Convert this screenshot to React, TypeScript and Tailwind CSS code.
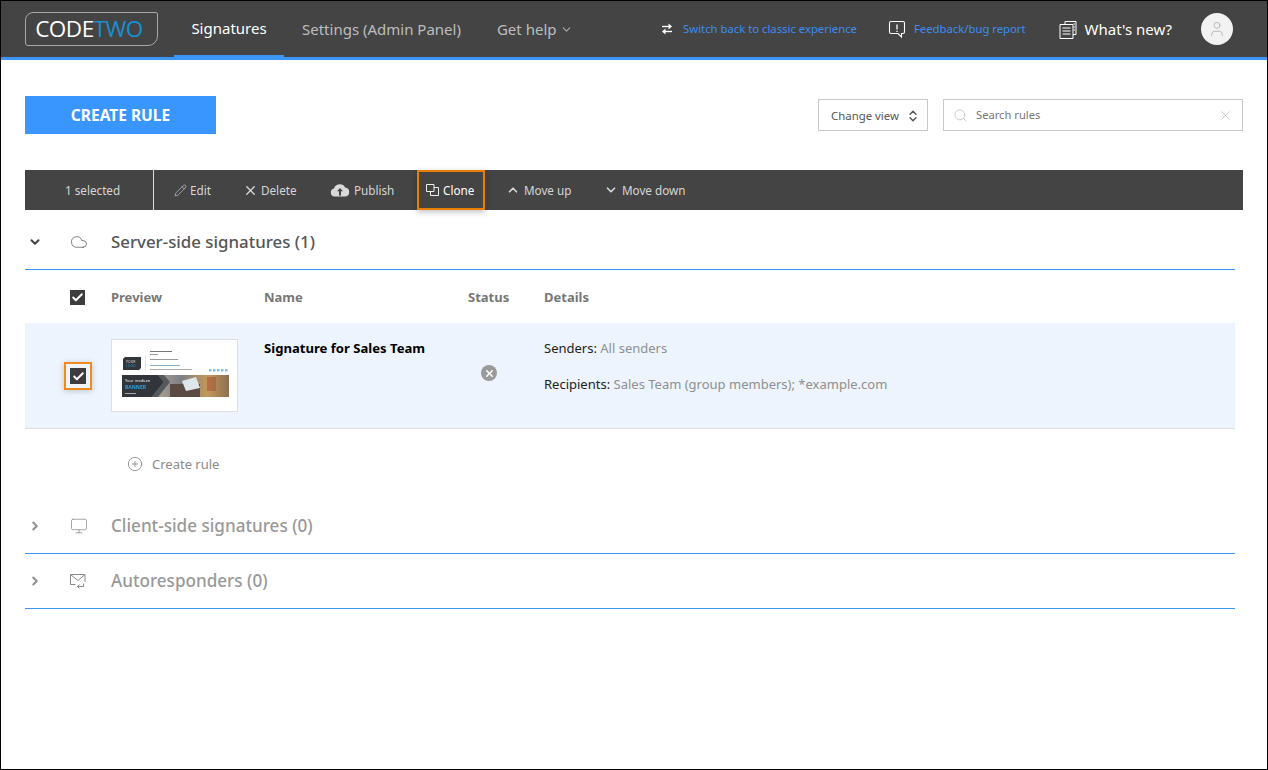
import { ChevronDown, ChevronRight, ChevronUp, ChevronsUpDown, Cloud, Monitor, Pencil, Search, X, Check, CirclePlus, User } from 'lucide-react';

const FONT = "font-['Noto_Sans','Open_Sans',sans-serif]";

function SwitchIcon() {
  return (
    <svg width="14" height="14" viewBox="0 0 14 14" fill="none" stroke="#fff" strokeWidth="1.4">
      <path d="M2 4.500h9" />
      <path d="M8.500 1.500v6L12 4.500z" fill="#fff" stroke="none" />
      <path d="M3 9.500h9" />
      <path d="M5.500 6.500v6L2 9.500z" fill="#fff" stroke="none" />
    </svg>
  );
}

function FeedbackIcon() {
  return (
    <svg width="18" height="19" viewBox="0 0 18 19" fill="none" stroke="#fff" strokeWidth="1.1">
      <path d="M3 1.500h12a1.500 1.500 0 0 1 1.500 1.500v9a1.500 1.500 0 0 1-1.500 1.500h-1.500v3.500l-3.500-3.500H3A1.500 1.500 0 0 1 1.500 12V3A1.500 1.500 0 0 1 3 1.500z" />
      <path d="M9 4.500v5M9 10.800v1.200" strokeWidth="1.3" />
    </svg>
  );
}

function NewsIcon() {
  return (
    <svg width="18" height="19" viewBox="0 0 18 19" fill="none" stroke="#fff" strokeWidth="1">
      <path d="M6 4V1.500h11v13h-3" />
      <path d="M1 4.500h13v14H1z" />
      <path d="M3.500 8h8M3.500 11h8M3.500 14h8M14.500 4h1.500M14.500 7h1.500M14.500 10h1.500" />
    </svg>
  );
}

function UploadCloudIcon() {
  return (
    <svg width="20" height="14" viewBox="0 0 20 14">
      <path d="M4.500 13.500A4 4 0 0 1 4 5.600 6 6 0 0 1 15.200 4.600 4.500 4.500 0 0 1 15.500 13.500z" fill="#d9d9d9" />
      <path d="M10 5l3 3.200h-2v4.300H9V8.200H7z" fill="#444" />
    </svg>
  );
}

function CloneIcon() {
  return (
    <svg width="13" height="12" viewBox="0 0 13 12" fill="none" stroke="#fff" strokeWidth="0.9">
      <path d="M0.500 0.500h7.500v7h-7.500z" />
      <path d="M8 3.500h4.500v8h-8v-4" />
    </svg>
  );
}

function AutoresponderIcon() {
  return (
    <svg width="16" height="15" viewBox="0 0 16 15" fill="none" stroke="#8a8a8a" strokeWidth="1">
      <path d="M0.500 0.500h14.500v7.500M0.500 0.500v10h5" />
      <path d="M0.500 0.500l7.500 6 7-6" />
      <path d="M7.500 12.500h6v-3M9.500 10.500l-2 2 2 2" />
    </svg>
  );
}

function Logo() {
  return (
    <div className="flex h-[34px] w-[133px] items-center justify-center rounded-tl-[8px] rounded-bl-[3px] rounded-tr-[2px] rounded-br-[10px] border border-[#a8a8a8] pr-[5px]">
      <span className="font-['Open_Sans',sans-serif] text-[22.500px] font-normal tracking-[-0.5px] text-white">
        CODE<span className="text-[#1a8fd0]">TWO</span>
      </span>
    </div>
  );
}

function SignatureThumb() {
  return (
    <div className="h-[73px] w-[127px] shrink-0 border border-[#dcdfe4] bg-white">
      <svg width="125" height="71" viewBox="0 0 125 71" fontFamily="Noto Sans, sans-serif">
        <defs>
          <linearGradient id="photo" x1="0" x2="1" y1="0" y2="0">
            <stop offset="0" stopColor="#6d6258" />
            <stop offset="0.25" stopColor="#b9ab98" />
            <stop offset="0.55" stopColor="#7d8086" />
            <stop offset="0.8" stopColor="#c4975a" />
            <stop offset="1" stopColor="#8a6f52" />
          </linearGradient>
          <filter id="soft">
            <feGaussianBlur stdDeviation="0.35" />
          </filter>
        </defs>
        <g filter="url(#soft)">
          <path d="M13 17h16v11l-2 2H11V19z" fill="#30343a" />
          <text x="14" y="23" fontSize="3.500" fill="#ddd">YOUR</text>
          <text x="14" y="27" fontSize="3.500" fill="#3a8fc4">LOGO</text>
          <rect x="33" y="15" width="0.800" height="15" fill="#ddd" />
          <rect x="38" y="11" width="22" height="1" fill="#777" />
          <rect x="38" y="14" width="8" height="1" fill="#999" />
          <rect x="38" y="19" width="28" height="1" fill="#999" />
          <rect x="38" y="25" width="30" height="1" fill="#8aaed0" />
          <rect x="38" y="29" width="42" height="1" fill="#aaa" />
          {[97, 101, 105, 109, 113].map((x) => (
            <rect key={x} x={x} y="29" width="2.500" height="2.500" fill="#7cc0e8" />
          ))}
          <rect x="10" y="35" width="107" height="22" fill="url(#photo)" />
          <rect x="58" y="44" width="30" height="13" fill="#5b4c44" />
          <rect x="95" y="37" width="9" height="14" fill="#a6573a" opacity="0.6" />
          <path d="M10 35h36l6 7-12 15H10z" fill="#33363b" />
          <path d="M46 35h6l6 7-12 15h-6l12-15z" fill="#55585d" />
          <path d="M70 41l14-4 4 11-14 3z" fill="#dfe6ea" />
          <text x="13" y="42" fontSize="4" fill="#eee">Your medium</text>
          <text x="13" y="48.500" fontSize="5" fontWeight="700" fill="#2f9fdc">BANNER</text>
          <rect x="13" y="53" width="11" height="1" fill="#aaa" />
        </g>
      </svg>
    </div>
  );
}

function ToolButton({ icon, label, className }: { icon: React.ReactNode; label: string; className: string }) {
  return (
    <button type="button" className={`flex items-center text-[11.700px] text-[#d6d6d6] ${className}`}>
      {icon}
      <span className="pt-[1px]">{label}</span>
    </button>
  );
}

function SectionHeader({ icon, title, open }: { icon: React.ReactNode; title: string; open?: boolean }) {
  return (
    <div className="grid h-[55px] grid-cols-[45px_41px_1fr] items-center border-b border-[#3c96f5]">
      {open ? (
        <ChevronDown size={14} strokeWidth={3.5} className="ml-[3px] text-[#444]" />
      ) : (
        <ChevronRight size={14} strokeWidth={3.5} className="ml-[3px] text-[#8f8f8f]" />
      )}
      {icon}
      <span className={`pb-[1px] font-medium ${open ? 'text-[16.850px] text-[#555]' : 'text-[17.100px] text-[#999]'}`}>{title}</span>
    </div>
  );
}

export default function App() {
  return (
    <div className={`flex h-[770px] w-[1268px] flex-col border border-black bg-white ${FONT}`}>
      <header className="flex h-[59px] shrink-0 items-stretch border-b-[3px] border-[#3b96f6] bg-[#444] pl-[24px]">
        <div className="flex items-center">
          <Logo />
        </div>
        <nav className="ml-[16px] flex items-stretch text-[15px] text-[#bdbdbd]">
          <a className="-mb-[3px] flex w-[110px] items-center justify-center border-b-[5px] border-[#3b96f6] text-white">
            Signatures
          </a>
          <a className="ml-[18px] flex items-center">Settings (Admin Panel)</a>
          <a className="ml-[36px] flex items-center">
            Get help
            <ChevronDown size={13} className="ml-[4px] text-[#aaa]" />
          </a>
        </nav>
        <div className="ml-auto flex items-center pr-[34px]">
          <SwitchIcon />
          <a className="ml-[9px] text-[11.300px] text-[#3b8df0]">Switch back to classic experience</a>
          <span className="ml-[31px]">
            <FeedbackIcon />
          </span>
          <a className="ml-[8px] text-[11.300px] text-[#3b8df0]">Feedback/bug report</a>
          <span className="ml-[33px]">
            <NewsIcon />
          </span>
          <span className="ml-[8px] text-[15px] text-white">What's new?</span>
          <span className="ml-[29px] flex h-[32px] w-[32px] items-center justify-center rounded-full bg-[#f2f2f2]">
            <User size={18} strokeWidth={1} className="text-[#aaa]" />
          </span>
        </div>
      </header>

      <main className="flex flex-1 flex-col px-[24px] pt-[36px]">
        <div className="flex items-center justify-between">
          <button
            type="button"
            className="h-[38px] w-[191px] bg-[#3a96ff] pt-[2px] text-[15.500px] font-bold text-white"
          >
            CREATE RULE
          </button>
          <div className="flex items-center">
            <div className="flex h-[32px] w-[110px] items-center border border-[#c8c8c8] pl-[12px] pt-[1px] text-[11.400px] text-[#555]">
              Change view
              <ChevronsUpDown size={14} strokeWidth={2.5} className="ml-[7px] text-[#555]" />
            </div>
            <div className="ml-[15px] flex h-[32px] w-[300px] items-center border border-[#c8c8c8] pl-[9px] pr-[9px] pt-[1px] text-[11.200px] text-[#777]">
              <Search size={15} strokeWidth={1.2} className="text-[#bbb]" />
              <span className="ml-[8px]">Search rules</span>
              <X size={15} strokeWidth={1} className="ml-auto text-[#aaa]" />
            </div>
          </div>
        </div>

        <div className="mt-[36px] flex h-[40px] items-stretch bg-[#444]">
          <div className="flex w-[129px] items-center border-r border-[#ddd] pl-[40px] pt-[1px] text-[11.700px] text-[#d6d6d6]">
            1 selected
          </div>
          <ToolButton
            className="ml-[20px] w-[70px]"
            icon={<Pencil size={13} strokeWidth={1.2} className="mr-[3px] text-[#d6d6d6]" />}
            label="Edit"
          />
          <ToolButton
            className="w-[86px]"
            icon={<X size={15} strokeWidth={2.2} className="mr-[3px] -ml-[1px] text-[#d6d6d6]" />}
            label="Delete"
          />
          <ToolButton
            className="w-[87px]"
            icon={
              <span className="mr-[4px]">
                <UploadCloudIcon />
              </span>
            }
            label="Publish"
          />
          <button
            type="button"
            className="flex w-[68px] items-center border-2 border-[#e87e04] pl-[7px] text-[11.700px] text-white shadow-[0_2px_6px_rgba(0,0,0,0.25)]"
          >
            <span className="mr-[4px]">
              <CloneIcon />
            </span>
            <span className="pt-[1px]">Clone</span>
          </button>
          <ToolButton
            className="ml-[21px] w-[98px]"
            icon={<ChevronUp size={14} strokeWidth={3} className="mr-[4px] text-[#d6d6d6]" />}
            label="Move up"
          />
          <ToolButton
            className=""
            icon={<ChevronDown size={14} strokeWidth={3} className="mr-[4px] text-[#d6d6d6]" />}
            label="Move down"
          />
        </div>

        <div className="mt-[5px] w-[1210px]">
          <SectionHeader
            open
            icon={<Cloud size={18} strokeWidth={1} className="text-[#555]" />}
            title="Server-side signatures (1)"
          />
          <div className="grid h-[53px] grid-cols-[86px_153px_204px_76px_1fr] items-center pt-[1px] text-[13px] font-bold text-[#777]">
            <span className="ml-[45px] flex h-[15px] w-[15px] items-center justify-center bg-[#3d3d3d]">
              <Check size={13} strokeWidth={3.5} className="text-white" />
            </span>
            <span className="pt-[2px]">Preview</span>
            <span className="pt-[2px]">Name</span>
            <span className="pt-[2px]">Status</span>
            <span className="pt-[2px]">Details</span>
          </div>
          <div className="grid h-[106px] grid-cols-[86px_153px_204px_76px_1fr] border-b border-[#ddd] bg-[#edf4fd] pt-[16px]">
            <div className="mt-[23px] ml-[39px] flex h-[28px] w-[28px] items-center justify-center border-2 border-[#f08a1d] shadow-[0_1px_6px_rgba(0,0,0,0.2)]">
              <span className="flex h-[16px] w-[16px] items-center justify-center bg-[#3d3d3d]">
                <Check size={13} strokeWidth={3.5} className="text-white" />
              </span>
            </div>
            <SignatureThumb />
            <div className="text-[13.100px] font-bold text-black">Signature for Sales Team</div>
            <div className="pl-[13px] pt-[26px]">
              <span className="flex h-[16px] w-[16px] items-center justify-center rounded-full bg-[#9a9a9a]">
                <X size={11} strokeWidth={3.5} className="text-white" />
              </span>
            </div>
            <div className="text-[13px] leading-[18px] text-[#222]">
              <div>
                Senders: <span className="text-[#8f8f8f]">All senders</span>
              </div>
              <div className="mt-[18px]">
                Recipients: <span className="text-[#8f8f8f]">Sales Team (group members); *example.com</span>
              </div>
            </div>
          </div>
          <div className="flex h-[70px] items-center pl-[103px] text-[13px] text-[#8a8a8a]">
            <CirclePlus size={16} strokeWidth={1} className="mr-[9px] -ml-[1px] text-[#666]" />
            <span className="pt-[1px]">Create rule</span>
          </div>
          <SectionHeader
            icon={<Monitor size={18} strokeWidth={1} className="text-[#8a8a8a]" />}
            title="Client-side signatures (0)"
          />
          <SectionHeader icon={<AutoresponderIcon />} title="Autoresponders (0)" />
        </div>
      </main>
    </div>
  );
}
